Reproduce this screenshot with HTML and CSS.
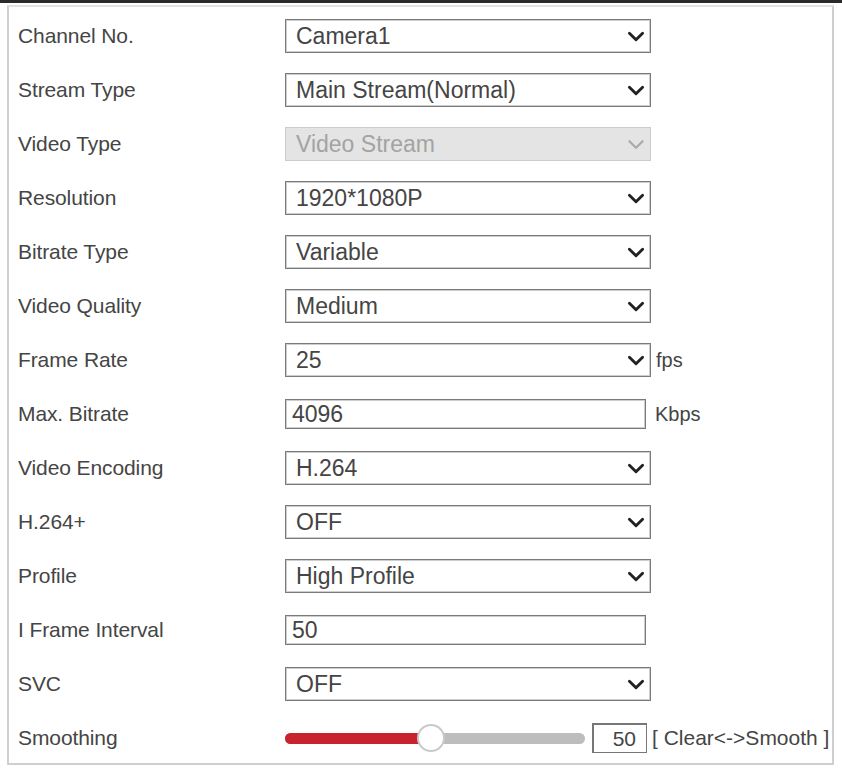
FILE: index.html
```html
<!DOCTYPE html>
<html lang="en">
<head>
    <meta charset="UTF-8">
    <title>Video Settings</title>
    <link rel="stylesheet" href="styles.css">
</head>
<body>

    <div class="topline"></div>

    <div class="panel">
        <div class="row">
            <div class="label">Channel No.</div>
            <div class="select"><span>Camera1</span><svg class="arrow" viewBox="0 0 16 10"><path d="M2 2 L8 8 L14 2"/></svg></div>
        </div>
        <div class="row">
            <div class="label">Stream Type</div>
            <div class="select"><span>Main Stream(Normal)</span><svg class="arrow" viewBox="0 0 16 10"><path d="M2 2 L8 8 L14 2"/></svg></div>
        </div>
        <div class="row">
            <div class="label">Video Type</div>
            <div class="select disabled"><span>Video Stream</span><svg class="arrow" viewBox="0 0 16 10"><path d="M2 2 L8 8 L14 2"/></svg></div>
        </div>
        <div class="row">
            <div class="label">Resolution</div>
            <div class="select"><span>1920*1080P</span><svg class="arrow" viewBox="0 0 16 10"><path d="M2 2 L8 8 L14 2"/></svg></div>
        </div>
        <div class="row">
            <div class="label">Bitrate Type</div>
            <div class="select"><span>Variable</span><svg class="arrow" viewBox="0 0 16 10"><path d="M2 2 L8 8 L14 2"/></svg></div>
        </div>
        <div class="row">
            <div class="label">Video Quality</div>
            <div class="select"><span>Medium</span><svg class="arrow" viewBox="0 0 16 10"><path d="M2 2 L8 8 L14 2"/></svg></div>
        </div>
        <div class="row">
            <div class="label">Frame Rate</div>
            <div class="select"><span>25</span><svg class="arrow" viewBox="0 0 16 10"><path d="M2 2 L8 8 L14 2"/></svg></div>
            <div class="unit">fps</div>
        </div>
        <div class="row">
            <div class="label">Max. Bitrate</div>
            <div class="text-input">4096</div>
            <div class="unit">Kbps</div>
        </div>
        <div class="row">
            <div class="label">Video Encoding</div>
            <div class="select"><span>H.264</span><svg class="arrow" viewBox="0 0 16 10"><path d="M2 2 L8 8 L14 2"/></svg></div>
        </div>
        <div class="row">
            <div class="label">H.264+</div>
            <div class="select"><span>OFF</span><svg class="arrow" viewBox="0 0 16 10"><path d="M2 2 L8 8 L14 2"/></svg></div>
        </div>
        <div class="row">
            <div class="label">Profile</div>
            <div class="select"><span>High Profile</span><svg class="arrow" viewBox="0 0 16 10"><path d="M2 2 L8 8 L14 2"/></svg></div>
        </div>
        <div class="row">
            <div class="label">I Frame Interval</div>
            <div class="text-input">50</div>
        </div>
        <div class="row">
            <div class="label">SVC</div>
            <div class="select"><span>OFF</span><svg class="arrow" viewBox="0 0 16 10"><path d="M2 2 L8 8 L14 2"/></svg></div>
        </div>
        <div class="row">
            <div class="label">Smoothing</div>
            <div class="slider">
                <div class="track">
                    <div class="fill" style="width: 48%"></div>
                    <div class="thumb" style="left: 48%"></div>
                </div>
            </div>
            <div class="num-box">50</div>
            <div class="hint">[ Clear&lt;-&gt;Smooth ]</div>
        </div>
    </div>

</body>
</html>
```

FILE: styles.css
```css
body {
    margin: 0;
    padding: 0;
    background: #fff;
    font-family: "Liberation Sans", Arial, sans-serif;
    color: #444;
}

.topline {
    height: 3px;
    background-color: #2b2b2b;
}

.panel {
    margin: 2px 8px 0 7px;
    padding: 2px 0 0 9px;
    border: 2px solid #cfcfcf;
    border-top-color: #e2e2e2;
    height: 760px;
    box-sizing: border-box;
}

.row {
    display: flex;
    align-items: center;
    height: 54px;
}

.label {
    width: 267px;
    flex-shrink: 0;
    font-size: 21px;
    color: #454545;
    letter-spacing: -0.1px;
}

.select {
    width: 366px;
    height: 34px;
    box-sizing: border-box;
    border: 1px solid #7a7a7a;
    box-shadow: inset 0 0 0 1px #cdcdcd;
    background: #fff;
    display: flex;
    align-items: center;
    justify-content: space-between;
    padding: 0 5px 0 10px;
    font-size: 23px;
    color: #454545;
}

.select .arrow {
    width: 18px;
    height: 11px;
    fill: none;
    stroke: #222;
    stroke-width: 2.6;
    stroke-linecap: round;
    stroke-linejoin: round;
}

.select.disabled {
    background: #e4e4e4;
    border-color: #cbcbcb;
    box-shadow: none;
    color: #a3a3a3;
}

.select.disabled .arrow {
    stroke: #a8a8a8;
    stroke-width: 2;
}

.text-input {
    width: 361px;
    height: 30px;
    box-sizing: border-box;
    border: 1px solid #7a7a7a;
    box-shadow: inset 0 0 0 1px #cdcdcd;
    padding: 0 6px;
    font-size: 23px;
    line-height: 28px;
    color: #454545;
}

.unit {
    margin-left: 9px;
    font-size: 20px;
    color: #454545;
}

.row .select + .unit {
    margin-left: 5px;
}

.slider {
    width: 300px;
    height: 30px;
    display: flex;
    align-items: center;
}

.track {
    position: relative;
    width: 100%;
    height: 11px;
    border-radius: 6px;
    background: #bdbdbd;
}

.fill {
    height: 100%;
    border-radius: 6px 0 0 6px;
    background: #c8232c;
}

.thumb {
    position: absolute;
    top: 50%;
    width: 24px;
    height: 24px;
    margin: -14px 0 0 -12px;
    border: 2px solid #c9c9c9;
    border-radius: 50%;
    background: #fff;
}

.num-box {
    width: 55px;
    height: 30px;
    box-sizing: border-box;
    margin-left: 7px;
    border: 1px solid #777;
    border-top-width: 2px;
    border-left-width: 2px;
    font-size: 21px;
    line-height: 27px;
    text-align: right;
    padding-right: 10px;
    color: #454545;
}

.hint {
    margin-left: 5px;
    font-size: 21px;
    color: #454545;
    white-space: nowrap;
}
```
